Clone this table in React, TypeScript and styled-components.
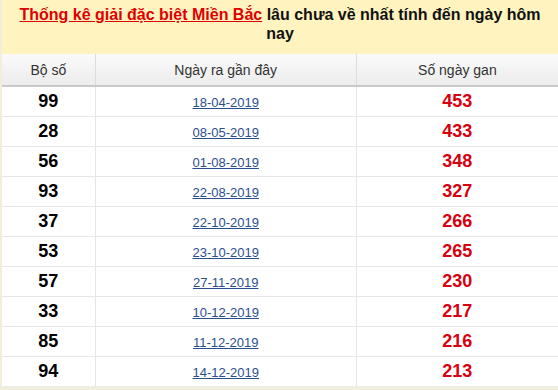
import styled, { createGlobalStyle } from "styled-components";

const GlobalStyle = createGlobalStyle`
  html, body {
    margin: 0;
    padding: 0;
    background: #fff;
  }
  body {
    font-family: "Liberation Sans", Arial, sans-serif;
  }
`;

const Box = styled.div`
  width: 558px;
  height: 390px;
  box-sizing: border-box;
  background-color: #fff3c0;
  border-left: 2px solid #f3eedc;
  border-bottom: 4px solid #f1eedf;
  overflow: hidden;
`;

const Title = styled.h2`
  margin: 0;
  height: 54px;
  box-sizing: border-box;
  padding: 5px 10px 0;
  font-size: 16px;
  line-height: 19px;
  font-weight: bold;
  text-align: center;
  color: #111;
`;

const TitleLink = styled.a`
  color: #e00000;
  text-decoration: underline;
`;

const Table = styled.table`
  width: 100%;
  border-collapse: collapse;
  background: #fff;
`;

const HeadCell = styled.th<{ $w: number }>`
  width: ${({ $w }) => $w}px;
  height: 31px;
  padding: 0;
  font-size: 14px;
  font-weight: normal;
  color: #333;
  background: linear-gradient(#fafafa, #ececec);
  border-left: 1px solid #dcdcdc;
  border-bottom: 2px solid #c9c9c9;
  &:first-child {
    border-left: none;
  }
`;

const Cell = styled.td`
  height: 29px;
  padding: 0;
  text-align: center;
  border-left: 1px solid #e6e6e6;
  border-bottom: 1px solid #e6e6e6;
  &:first-child {
    border-left: none;
  }
`;

const Num = styled.span<{ $red?: boolean }>`
  font-size: 18px;
  font-weight: bold;
  color: ${({ $red }) => ($red ? "#d7000f" : "#000")};
`;

const DateLink = styled.a`
  font-size: 13px;
  color: #2b4f8c;
  text-decoration: underline;
`;

const rows = [
  { so: "99", ngay: "18-04-2019", gan: 453 },
  { so: "28", ngay: "08-05-2019", gan: 433 },
  { so: "56", ngay: "01-08-2019", gan: 348 },
  { so: "93", ngay: "22-08-2019", gan: 327 },
  { so: "37", ngay: "22-10-2019", gan: 266 },
  { so: "53", ngay: "23-10-2019", gan: 265 },
  { so: "57", ngay: "27-11-2019", gan: 230 },
  { so: "33", ngay: "10-12-2019", gan: 217 },
  { so: "85", ngay: "11-12-2019", gan: 216 },
  { so: "94", ngay: "14-12-2019", gan: 213 },
];

const App = () => {
  return (
    <>
      <GlobalStyle />
      <Box>
        <Title>
          <TitleLink href="#">Thống kê giải đặc biệt Miền Bắc</TitleLink> lâu chưa
          về nhất tính đến ngày hôm nay
        </Title>
        <Table>
          <thead>
            <tr>
              <HeadCell $w={93}>Bộ số</HeadCell>
              <HeadCell $w={261}>Ngày ra gần đây</HeadCell>
              <HeadCell $w={202}>Số ngày gan</HeadCell>
            </tr>
          </thead>
          <tbody>
            {rows.map((r) => (
              <tr key={r.so}>
                <Cell>
                  <Num>{r.so}</Num>
                </Cell>
                <Cell>
                  <DateLink href="#">{r.ngay}</DateLink>
                </Cell>
                <Cell>
                  <Num $red>{r.gan}</Num>
                </Cell>
              </tr>
            ))}
          </tbody>
        </Table>
      </Box>
    </>
  );
};

export default App;
